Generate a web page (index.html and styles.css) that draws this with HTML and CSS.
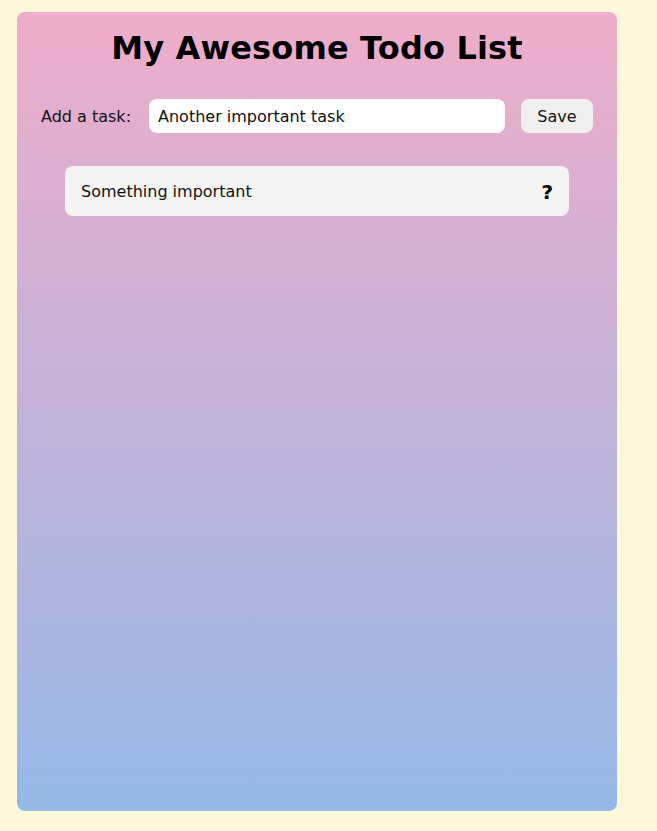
FILE: index.html
```html
<!DOCTYPE html>
<html>
<head>
<meta charset="utf-8">
<link rel="stylesheet" href="styles.css">
</head>
<body>
<main class="card">
  <h1 class="title">My Awesome Todo List</h1>
  <form class="add-form">
    <label class="add-label" for="task">Add a task:</label>
    <input class="add-input" id="task" type="text" value="Another important task">
    <button class="save-btn" type="button">Save</button>
  </form>
  <ul class="todo-list">
    <li class="todo-item"><span class="todo-text">Something important</span><span class="todo-mark">?</span></li>
  </ul>
</main>
</body>
</html>
```
FILE: styles.css
```css
html, body {
  margin: 0;
  padding: 0;
}
body {
  background: #fef8db;
  font-family: "DejaVu Sans", Verdana, sans-serif;
  padding: 12px 17px;
}
.card {
  width: 600px;
  height: 799px;
  box-sizing: border-box;
  border-radius: 8px;
  background: linear-gradient(to bottom, #efadca, #95b8e7);
  padding: 16px 24px;
}
.title {
  margin: 0;
  text-align: center;
  font-size: 32px;
  font-weight: bold;
  line-height: 40px;
  letter-spacing: 0.15px;
  color: #000;
}
.add-form {
  display: flex;
  align-items: center;
  gap: 16px;
  margin-top: 31px;
}
.add-label {
  font-size: 16px;
  color: #111;
  margin-right: 2px;
  padding-top: 1px;
}
.add-input {
  flex: 1;
  height: 34px;
  box-sizing: border-box;
  border: none;
  border-radius: 8px;
  background: #fff;
  padding: 1px 9px 0;
  font-family: inherit;
  font-size: 16px;
  color: #111;
  outline: none;
}
.save-btn {
  width: 72px;
  height: 34px;
  border: none;
  border-radius: 8px;
  background: #efefef;
  padding-top: 1px;
  font-family: inherit;
  font-size: 16px;
  color: #111;
}
.todo-list {
  list-style: none;
  margin: 33px 24px 0;
  padding: 0;
}
.todo-item {
  display: flex;
  align-items: center;
  justify-content: space-between;
  height: 50px;
  box-sizing: border-box;
  padding: 1px 16px 0;
  background: #f4f4f4;
  border-radius: 8px;
  font-size: 16px;
  color: #111;
}
.todo-mark {
  font-weight: bold;
  font-size: 20px;
  color: #000;
}
```
